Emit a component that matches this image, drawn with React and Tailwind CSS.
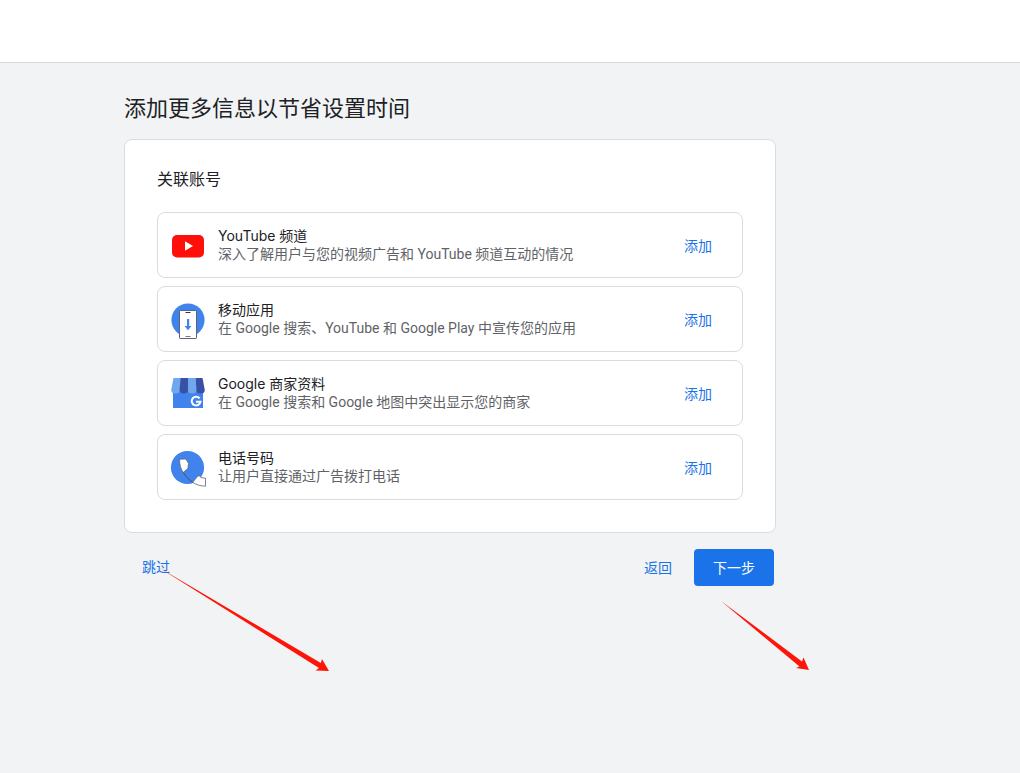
import React from "react";

function YouTubeIcon() {
  return (
    <svg viewBox="0 -1 36 36" className="size-9" aria-hidden="true">
      <rect x="2" y="7" width="32" height="22.500" rx="5" fill="#ff0f0a" />
      <path d="M15 13.300v9.400l8-4.700z" fill="#fff" />
    </svg>
  );
}

function MobileIcon() {
  return (
    <svg viewBox="0 -1 36 36" className="size-9 overflow-visible" aria-hidden="true">
      <circle cx="18" cy="18" r="16.600" fill="#4083ec" />
      <rect x="9.500" y="8.500" width="17" height="28" rx="0.600" fill="#fff" stroke="#5c6577" />
      <path d="M15.500 10.500h5" stroke="#33373d" />
      <path d="M15.500 34.500h5" stroke="#777b82" />
      <path d="M17 17h2.200v7H21.500L18 28.200 14.500 24H17z" fill="#4083ec" />
    </svg>
  );
}

function StoreIcon() {
  return (
    <svg viewBox="0 -1 36 36" className="size-9" aria-hidden="true">
      <path d="M3 13h30v19H3z" fill="#4083ec" />
      <path d="M3.500 2H11l-1.200 12a4.300 3.500 0 0 1-8.600 0z" fill="#6fa8ef" />
      <path d="M10.500 2H18v12a4.200 3.500 0 0 1-8.400 0z" fill="#3752a5" />
      <path d="M18 2h7.500l.9 12a4.200 3.500 0 0 1-8.400 0z" fill="#6fa8ef" />
      <path d="M25.500 2h7L34.800 14a4.200 3.500 0 0 1-8.400 0z" fill="#3752a5" />
      <path
        d="M29.600 22.300a4.400 4.400 0 1 0 .9 3.400h-4.500"
        fill="none"
        stroke="#fff"
        strokeWidth="2"
      />
    </svg>
  );
}

function PhoneIcon() {
  return (
    <svg viewBox="0 -1 36 36" className="size-9 overflow-visible" aria-hidden="true">
      <circle cx="17.500" cy="17.500" r="16.600" fill="#4083ec" />
      <path
        d="M9.500 9.200l6.300-.2 2.700 4.300-.6 5.200-4.700 4c-2.500-3.500-3.700-8-3.700-13.300z"
        fill="#fff"
        stroke="#5c6577"
        strokeWidth="0.800"
      />
      <path d="M13.200 22.500c2.500 4 5.500 7 9.500 9.800" fill="none" stroke="#44546e" />
      <path
        d="M22.700 32.300l5.300-6.500 2 .2 1 1.700 4.500.5v8c-5-.2-9.300-1.400-12.800-3.900z"
        fill="#fff"
        stroke="#5c6577"
        strokeWidth="0.800"
      />
    </svg>
  );
}

const accounts = [
  {
    title: "YouTube 频道",
    text: "深入了解用户与您的视频广告和 YouTube 频道互动的情况",
    Icon: YouTubeIcon,
  },
  {
    title: "移动应用",
    text: "在 Google 搜索、YouTube 和 Google Play 中宣传您的应用",
    Icon: MobileIcon,
  },
  {
    title: "Google 商家资料",
    text: "在 Google 搜索和 Google 地图中突出显示您的商家",
    Icon: StoreIcon,
  },
  { title: "电话号码", text: "让用户直接通过广告拨打电话", Icon: PhoneIcon },
];

function AccountRow({ title, text, Icon }) {
  return (
    <li className="flex items-center rounded-lg border border-[#dadce0] py-[13px] pr-4 pl-3">
      <Icon />
      <div className="ml-3 min-w-0 flex-1 text-sm leading-[19px]">
        <h3 className="font-[Inter,'Noto_Sans_CJK_SC',sans-serif] text-[#202124]">{title}</h3>
        <p className="text-[#5f6368]">{text}</p>
      </div>
      <button
        type="button"
        aria-label={`添加 ${title}`}
        className="shrink-0 px-3.5 pt-[9px] pb-2 text-sm leading-5 text-[#1a73e8]"
      >
        添加
      </button>
    </li>
  );
}

export default function App() {
  return (
    <div className="flex min-h-screen flex-col bg-[#f1f3f4] font-['Roboto','Noto_Sans_CJK_SC',sans-serif] text-[#202124]">
      <header className="h-[63px] border-b border-[#dadce0] bg-white" />
      <main className="w-full max-w-[776px] pt-[30px] pb-8 pl-31">
        <h1 className="text-[22px] leading-8">添加更多信息以节省设置时间</h1>
        <section className="mt-3.5 rounded-lg border border-[#dadce0] bg-white px-8 pt-7 pb-8">
          <h2 className="text-base leading-6">关联账号</h2>
          <ul className="mt-5 flex flex-col gap-2">
            {accounts.map((account) => (
              <AccountRow key={account.title} {...account} />
            ))}
          </ul>
        </section>
        <div className="mt-4 flex items-start justify-between pr-0.5 pl-1 text-sm leading-5">
          <div className="relative">
            <button type="button" className="px-3.5 py-2 text-[#1a73e8]">
              跳过
            </button>
            <svg
              viewBox="0 0 176 110"
              className="pointer-events-none absolute top-4 left-7 h-[110px] w-44"
              aria-hidden="true"
            >
              <path d="M2 2L164.800 98 166 94 173 106 159.500 105.500 163 103z" fill="#ff1408" />
            </svg>
          </div>
          <div className="flex items-start gap-2">
            <button type="button" className="px-3.5 pt-[9px] pb-2 text-[#1a73e8]">
              返回
            </button>
            <div className="relative">
              <button type="button" className="w-20 rounded bg-[#1a73e8] pt-[9px] pb-2 text-white">
                下一步
              </button>
              <svg
                viewBox="0 0 96 76"
                className="pointer-events-none absolute top-12 left-6 h-[76px] w-24"
                aria-hidden="true"
              >
                <path d="M3 4L84 64.500 85.500 60.500 91 73 78 71 81.500 69.500z" fill="#ff1408" />
              </svg>
            </div>
          </div>
        </div>
      </main>
    </div>
  );
}
